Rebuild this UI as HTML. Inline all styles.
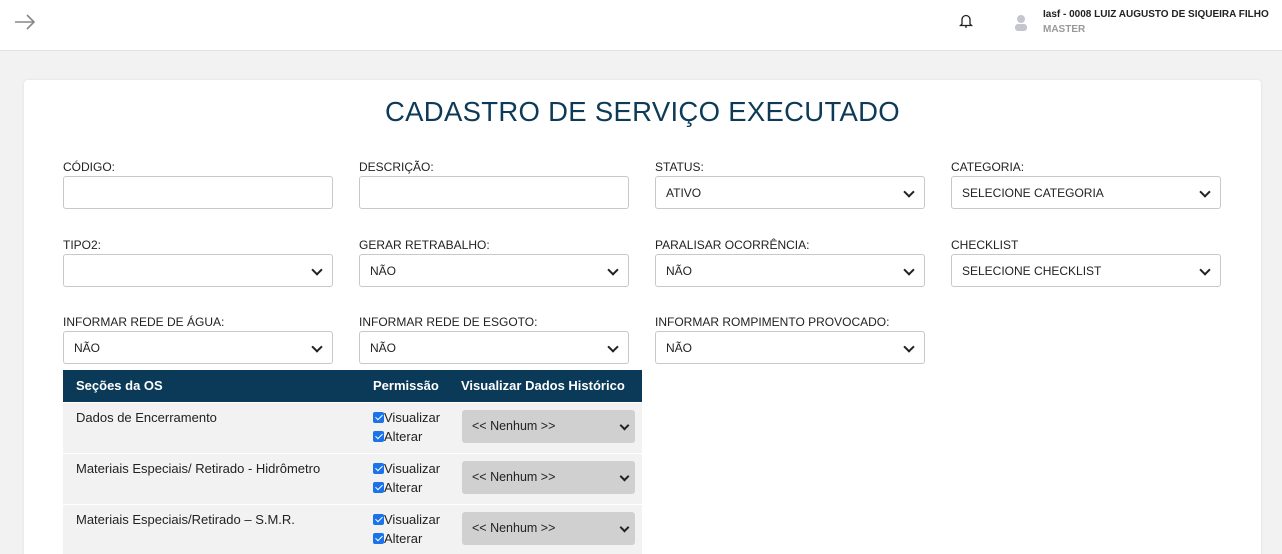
<!DOCTYPE html>
<html><head><meta charset="utf-8"><style>
*{box-sizing:border-box;margin:0;padding:0}
html,body{width:1282px;height:554px;overflow:hidden}
body{background:#f2f2f2;font-family:"Liberation Sans",sans-serif;color:#222;position:relative}
.hdr{position:absolute;left:0;top:0;width:1282px;height:51px;background:#fff;border-bottom:1px solid #e2e2e2}
.card{position:absolute;left:24px;top:80px;width:1237px;height:500px;background:#fff;border-radius:4px;box-shadow:0 0 3px rgba(0,0,0,.08)}
h1{position:absolute;left:0;width:1285px;top:96px;text-align:center;font-weight:400;font-size:27.5px;color:#0d3a57;letter-spacing:.3px}
.lbl{position:absolute;font-size:12px;color:#222}
.inp{position:absolute;width:270px;height:33px;border:1px solid #c8c8c8;border-radius:3px;background:#fff;font-size:12px;padding:0 10px;line-height:33px}
.sel::after{content:"";position:absolute;right:11px;top:11px;width:6px;height:6px;border-right:2px solid #222;border-bottom:2px solid #222;transform:rotate(45deg)}
.th{position:absolute;left:63px;top:370px;width:579px;height:32px;background:#0a3a57;color:#fff;font-size:13px;font-weight:bold}
.row{position:absolute;left:63px;width:579px;height:50px;background:#f2f2f2;font-size:13px}
.cb{display:inline-block;width:11px;height:11px;background:#1a73e8;border-radius:2px;vertical-align:-1px;position:relative}
.cb::after{content:"";position:absolute;left:3.5px;top:0.5px;width:3px;height:6px;border-right:1.5px solid #fff;border-bottom:1.5px solid #fff;transform:rotate(45deg)}
.ns{position:absolute;left:399px;top:7px;width:173px;height:33px;background:#d0d0d0;border-radius:3px;font-size:12.5px;padding-left:10px;line-height:33px}
.ns::after{content:"";position:absolute;right:7px;top:12px;width:5px;height:5px;border-right:2px solid #222;border-bottom:2px solid #222;transform:rotate(45deg)}
</style></head><body>
<div class="hdr">
<svg style="position:absolute;left:14px;top:14px" width="22" height="16" viewBox="0 0 22 16"><path d="M1 8H20M13 1L20 8L13 15" fill="none" stroke="#888" stroke-width="1.6"/></svg>
<svg style="position:absolute;left:959px;top:13px" width="14" height="16" viewBox="0 0 14 16"><path d="M3 11V6.5a4 4 0 0 1 8 0V11l1.5 1.5h-11z M6 14h2" fill="none" stroke="#222" stroke-width="1.3"/></svg>
<svg style="position:absolute;left:1013px;top:14px" width="16" height="18" viewBox="0 0 16 18"><circle cx="8" cy="5" r="4" fill="#c5c5cf"/><rect x="2" y="10" width="12" height="7" rx="3" fill="#c5c5cf"/></svg>
<div style="position:absolute;left:1043px;top:9px;font-size:10px;font-weight:bold;color:#222">Iasf - 0008 LUIZ AUGUSTO DE SIQUEIRA FILHO</div>
<div style="position:absolute;left:1043px;top:24px;font-size:10px;font-weight:bold;color:#999">MASTER</div>
</div>
<div class="card"></div>
<h1>CADASTRO DE SERVIÇO EXECUTADO</h1>
<div class="lbl" style="left:63px;top:160px">CÓDIGO:</div><div class="inp" style="left:63px;top:176px"></div>
<div class="lbl" style="left:359px;top:160px">DESCRIÇÃO:</div><div class="inp" style="left:359px;top:176px"></div>
<div class="lbl" style="left:655px;top:160px">STATUS:</div><div class="inp sel" style="left:655px;top:176px">ATIVO</div>
<div class="lbl" style="left:951px;top:160px">CATEGORIA:</div><div class="inp sel" style="left:951px;top:176px">SELECIONE CATEGORIA</div>
<div class="lbl" style="left:63px;top:238px">TIPO2:</div><div class="inp sel" style="left:63px;top:254px"></div>
<div class="lbl" style="left:359px;top:238px">GERAR RETRABALHO:</div><div class="inp sel" style="left:359px;top:254px">NÃO</div>
<div class="lbl" style="left:655px;top:238px">PARALISAR OCORRÊNCIA:</div><div class="inp sel" style="left:655px;top:254px">NÃO</div>
<div class="lbl" style="left:951px;top:238px">CHECKLIST</div><div class="inp sel" style="left:951px;top:254px">SELECIONE CHECKLIST</div>
<div class="lbl" style="left:63px;top:315px">INFORMAR REDE DE ÁGUA:</div><div class="inp sel" style="left:63px;top:331px">NÃO</div>
<div class="lbl" style="left:359px;top:315px">INFORMAR REDE DE ESGOTO:</div><div class="inp sel" style="left:359px;top:331px">NÃO</div>
<div class="lbl" style="left:655px;top:315px">INFORMAR ROMPIMENTO PROVOCADO:</div><div class="inp sel" style="left:655px;top:331px">NÃO</div>
<div class="th"><span style="position:absolute;left:13px;top:8px">Seções da OS</span><span style="position:absolute;left:310px;top:8px">Permissão</span><span style="position:absolute;left:398px;top:8px">Visualizar Dados Histórico</span></div>
<div class="row" style="top:403px"><span style="position:absolute;left:13px;top:7px">Dados de Encerramento</span><span style="position:absolute;left:310px;top:7px"><i class="cb"></i>Visualizar</span><span style="position:absolute;left:310px;top:26px"><i class="cb"></i>Alterar</span><div class="ns">&lt;&lt; Nenhum &gt;&gt;</div></div>
<div class="row" style="top:454px"><span style="position:absolute;left:13px;top:7px">Materiais Especiais/ Retirado - Hidrômetro</span><span style="position:absolute;left:310px;top:7px"><i class="cb"></i>Visualizar</span><span style="position:absolute;left:310px;top:26px"><i class="cb"></i>Alterar</span><div class="ns">&lt;&lt; Nenhum &gt;&gt;</div></div>
<div class="row" style="top:505px"><span style="position:absolute;left:13px;top:7px">Materiais Especiais/Retirado – S.M.R.</span><span style="position:absolute;left:310px;top:7px"><i class="cb"></i>Visualizar</span><span style="position:absolute;left:310px;top:26px"><i class="cb"></i>Alterar</span><div class="ns">&lt;&lt; Nenhum &gt;&gt;</div></div>
</body></html>
